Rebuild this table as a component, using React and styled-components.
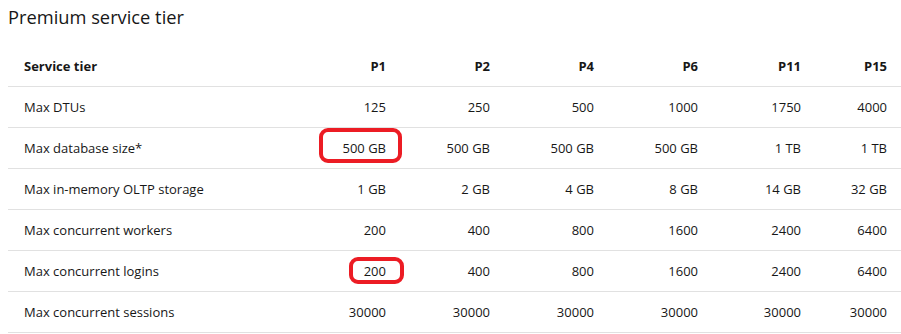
import React from 'react';
import styled, { createGlobalStyle } from 'styled-components';

const GlobalStyle = createGlobalStyle`
  body {
    margin: 0;
    background: #ffffff;
    font-family: "Segoe UI", "Open Sans", "Liberation Sans", sans-serif;
    color: #171717;
    overflow: hidden;
  }
`;

const Page = styled.div`
  padding: 0 0 0 8px;
  width: 893px;
`;

const Title = styled.h2`
  margin: 0;
  height: 46px;
  padding-top: 4px;
  box-sizing: border-box;
  font-size: 18.3px;
  font-weight: 400;
  line-height: 26px;
  color: #171717;
`;

const Table = styled.div`
  display: grid;
  grid-template-columns: 288px 104px 104px 104px 104px 103px 86px;
`;

const Cell = styled.div`
  height: 40px;
  border-bottom: 1px solid #e1e1e1;
  display: flex;
  align-items: center;
  justify-content: ${({ first }) => (first ? 'flex-start' : 'flex-end')};
  padding: ${({ first }) => (first ? '0 0 0 16px' : '0 14px 0 0')};
  font-size: 13px;
  line-height: 18px;
  font-weight: ${({ head }) => (head ? 700 : 400)};
  color: #171717;
  white-space: nowrap;
`;

const Marked = styled.span`
  position: relative;

  &::after {
    content: '';
    position: absolute;
    left: ${({ box }) => box.left}px;
    right: ${({ box }) => box.right}px;
    top: ${({ box }) => box.top}px;
    bottom: ${({ box }) => box.bottom}px;
    border: 4px solid #ec1c24;
    border-radius: 9px;
  }
`;

const head = ['Service tier', 'P1', 'P2', 'P4', 'P6', 'P11', 'P15'];

const rows = [
  ['Max DTUs', '125', '250', '500', '1000', '1750', '4000'],
  ['Max database size*', '500 GB', '500 GB', '500 GB', '500 GB', '1 TB', '1 TB'],
  ['Max in-memory OLTP storage', '1 GB', '2 GB', '4 GB', '8 GB', '14 GB', '32 GB'],
  ['Max concurrent workers', '200', '400', '800', '1600', '2400', '6400'],
  ['Max concurrent logins', '200', '400', '800', '1600', '2400', '6400'],
  ['Max concurrent sessions', '30000', '30000', '30000', '30000', '30000', '30000'],
];

// red annotation boxes drawn over the screenshot
const marks = {
  '1-1': { left: -23, right: -16, top: -11, bottom: -6 },
  '4-1': { left: -15, right: -18, top: -5, bottom: -4 },
};

export default function App() {
  return (
    <Page>
      <GlobalStyle />
      <Title>Premium service tier</Title>
      <Table>
        {head.map((h, i) => (
          <Cell key={h} head first={i === 0}>{h}</Cell>
        ))}
        {rows.map((r, ri) =>
          r.map((v, ci) => {
            const box = marks[`${ri}-${ci}`];
            return (
              <Cell key={`${ri}-${ci}`} first={ci === 0}>
                {box ? <Marked box={box}>{v}</Marked> : v}
              </Cell>
            );
          })
        )}
      </Table>
    </Page>
  );
}
